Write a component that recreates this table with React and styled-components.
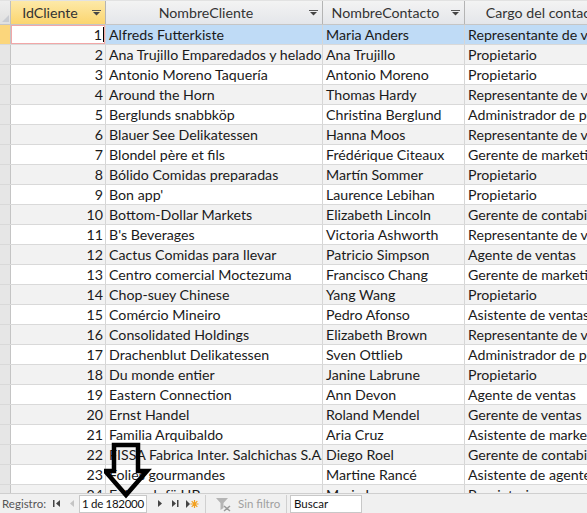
import React from 'react'
import styled, { createGlobalStyle } from 'styled-components'

const Global = createGlobalStyle`
  html, body { margin: 0; padding: 0; background: #fff; }
  body { font-family: Lato, "Open Sans", sans-serif; overflow: hidden; }
`

const COLS = '11px 95px 217px 142px 160px'

const rows = [
  ['Alfreds Futterkiste', 'Maria Anders', 'Representante de ventas'],
  ['Ana Trujillo Emparedados y helados', 'Ana Trujillo', 'Propietario'],
  ['Antonio Moreno Taquería', 'Antonio Moreno', 'Propietario'],
  ['Around the Horn', 'Thomas Hardy', 'Representante de ventas'],
  ['Berglunds snabbköp', 'Christina Berglund', 'Administrador de pedidos'],
  ['Blauer See Delikatessen', 'Hanna Moos', 'Representante de ventas'],
  ['Blondel père et fils', 'Frédérique Citeaux', 'Gerente de marketing'],
  ['Bólido Comidas preparadas', 'Martín Sommer', 'Propietario'],
  ["Bon app'", 'Laurence Lebihan', 'Propietario'],
  ['Bottom-Dollar Markets', 'Elizabeth Lincoln', 'Gerente de contabilidad'],
  ["B's Beverages", 'Victoria Ashworth', 'Representante de ventas'],
  ['Cactus Comidas para llevar', 'Patricio Simpson', 'Agente de ventas'],
  ['Centro comercial Moctezuma', 'Francisco Chang', 'Gerente de marketing'],
  ['Chop-suey Chinese', 'Yang Wang', 'Propietario'],
  ['Comércio Mineiro', 'Pedro Afonso', 'Asistente de ventas'],
  ['Consolidated Holdings', 'Elizabeth Brown', 'Representante de ventas'],
  ['Drachenblut Delikatessen', 'Sven Ottlieb', 'Administrador de pedidos'],
  ['Du monde entier', 'Janine Labrune', 'Propietario'],
  ['Eastern Connection', 'Ann Devon', 'Agente de ventas'],
  ['Ernst Handel', 'Roland Mendel', 'Gerente de ventas'],
  ['Familia Arquibaldo', 'Aria Cruz', 'Asistente de marketing'],
  ['FISSA Fabrica Inter. Salchichas S.A.', 'Diego Roel', 'Gerente de contabilidad'],
  ['Folies gourmandes', 'Martine Rancé', 'Asistente de agente de ventas'],
  ['Folk och fä HB', 'Maria Larsson', 'Propietario'],
]

const Sheet = styled.div`
  position: relative;
  width: 587px;
  height: 513px;
  display: flex;
  flex-direction: column;
  overflow: hidden;
  font-size: 14.2px;
  color: #1a1a1a;
`

const HeadRow = styled.div`
  display: grid;
  grid-template-columns: ${COLS};
  height: 25px;
  flex: none;
  border-top: 1px solid #e2e2e2;
  border-bottom: 1px solid #c5c5c5;
  box-sizing: border-box;
`

const HeadCell = styled.div`
  display: flex;
  align-items: center;
  justify-content: center;
  position: relative;
  padding-right: ${p => (p.$filter ? '16px' : '0')};
  border-right: 1px solid #b4b4b4;
  color: #333;
  white-space: nowrap;
  overflow: hidden;
  background: ${p => (p.$active
    ? 'linear-gradient(#fde9a8, #fbd56f)'
    : 'linear-gradient(#f3f3f3, #e4e6ea)')};
`

const Corner = styled(HeadCell)`
  background: linear-gradient(#eeeeee, #e0e0e0);
  border-right: 1px solid #c0c0c0;
`

const Filter = styled.svg`
  position: absolute;
  right: 4px;
  top: 9px;
`

const Body = styled.div`
  flex: 1;
  overflow: hidden;
`

const Row = styled.div`
  display: grid;
  grid-template-columns: ${COLS};
  height: 20px;
  box-sizing: border-box;
  border-bottom: 1px solid #d9d9d9;
  background: ${p => (p.$alt ? '#f2f2f2' : '#fff')};
`

const Selector = styled.div`
  background: ${p => (p.$on ? '#fbd67c' : '#e6e6e6')};
  border-right: 1px solid #c4c4c4;
`

const Cell = styled.div`
  display: flex;
  align-items: center;
  justify-content: ${p => (p.$num ? 'flex-end' : 'flex-start')};
  padding: 0 ${p => (p.$num ? '2px' : '0')} 0 ${p => (p.$num ? '0' : '3px')};
  border-right: 1px solid #d6d6d6;
  white-space: nowrap;
  overflow: hidden;
  background: ${p => (p.$sel ? '#bfdbf6' : 'transparent')};
`

const EditCell = styled(Cell)`
  background: #fff;
  box-shadow: inset 0 0 0 1px #f2a7a7;
  padding-right: 1px;
`

const Caret = styled.span`
  display: inline-block;
  width: 1px;
  height: 15px;
  background: #000;
  margin-left: 1px;
`

const Status = styled.div`
  flex: none;
  height: 20px;
  display: flex;
  align-items: center;
  background: #f0f0f0;
  border-top: 1px solid #cfcfcf;
  font-size: 11.5px;
  color: #555;
  box-sizing: border-box;
  white-space: nowrap;
`

const Label = styled.span`
  width: 48px;
  padding-left: 2px;
  box-sizing: border-box;
`

const NavBtn = styled.span`
  width: ${p => p.$w || 15}px;
  display: flex;
  justify-content: center;
  align-items: center;
`

const Counter = styled.div`
  width: 68px;
  height: 18px;
  background: #fff;
  border: 1px solid #c8c8c8;
  box-sizing: border-box;
  display: flex;
  align-items: center;
  padding-left: 2px;
  letter-spacing: -0.3px;
  color: #111;
  margin: 0 6px 0 0;
  overflow: hidden;
`

const Sep = styled.div`
  width: 1px;
  height: 18px;
  background: #d0d0d0;
`

const FilterBtn = styled.div`
  display: flex;
  align-items: center;
  gap: 4px;
  width: 80px;
  padding-left: 8px;
  box-sizing: border-box;
  color: #a0a0a0;
`

const Search = styled.div`
  width: 72px;
  height: 18px;
  background: #fff;
  border: 1px solid #c8c8c8;
  box-sizing: border-box;
  display: flex;
  align-items: center;
  padding-left: 3px;
  color: #111;
  margin-left: 3px;
`

const Pointer = styled.svg`
  position: absolute;
  left: 104px;
  top: 441px;
  pointer-events: none;
`

const FilterArrow = () => (
  <Filter width="9" height="6" viewBox="0 0 9 6">
    <rect x="0" y="0" width="9" height="1" fill="#555" />
    <path d="M1 2h7l-3.5 3.5z" fill="#444" />
  </Filter>
)

const Tri = ({ dir = 'r', color = '#444', bar }) => (
  <svg width="9" height="9" viewBox="0 0 9 9">
    {dir === 'r'
      ? <path d={bar ? 'M1 1v7l4-3.5z' : 'M2 1v7l4-3.5z'} fill={color} />
      : <path d={bar ? 'M8 1v7l-4-3.5z' : 'M7 1v7l-4-3.5z'} fill={color} />}
    {bar && <rect x={dir === 'r' ? 6 : 1} y="1" width="1.5" height="7" fill={color} />}
  </svg>
)

const NewRec = () => (
  <svg width="14" height="10" viewBox="0 0 14 10">
    <path d="M1 1v8l4-4z" fill="#444" />
    <path d="M9.5 1v8M5.5 5h8M6.7 2.2l5.6 5.6M6.7 7.8l5.6-5.6" stroke="#f2a01e" strokeWidth="1.2" />
  </svg>
)

const Funnel = () => (
  <svg width="20" height="16" viewBox="0 0 20 16">
    <path d="M2 2h12l-4.5 5v5l-3 2v-7z" fill="#b5b5b5" />
    <path d="M10 10l6 5M16 10l-6 5" stroke="#9a9a9a" strokeWidth="1.5" />
  </svg>
)

export default function App() {
  return (
    <Sheet>
      <Global />
      <HeadRow>
        <Corner>
          <svg width="11" height="24" viewBox="0 0 11 24" style={{ position: 'absolute', left: 0, top: 0 }}>
            <path d="M9 14v7H2z" fill="#c9ccd2" />
          </svg>
        </Corner>
        <HeadCell $active $filter>IdCliente<FilterArrow /></HeadCell>
        <HeadCell $filter>NombreCliente<FilterArrow /></HeadCell>
        <HeadCell $filter>NombreContacto<FilterArrow /></HeadCell>
        <HeadCell>Cargo del contacto</HeadCell>
      </HeadRow>
      <Body>
        {rows.map((r, i) => {
          const first = i === 0
          return (
            <Row key={i} $alt={i % 2 === 1}>
              <Selector $on={first} />
              {first
                ? <EditCell $num>1<Caret /></EditCell>
                : <Cell $num>{i + 1}</Cell>}
              <Cell $sel={first}>{r[0]}</Cell>
              <Cell $sel={first}>{r[1]}</Cell>
              <Cell $sel={first}>{r[2]}</Cell>
            </Row>
          )
        })}
      </Body>
      <Status>
        <Label>Registro:</Label>
        <NavBtn $w={16}><Tri dir="l" bar /></NavBtn>
        <NavBtn $w={15}><Tri dir="l" color="#c4c4c4" /></NavBtn>
        <Counter>1 de 182000</Counter>
        <NavBtn $w={15}><Tri dir="r" /></NavBtn>
        <NavBtn $w={15}><Tri dir="r" bar /></NavBtn>
        <NavBtn $w={18}><NewRec /></NavBtn>
        <Sep style={{ marginLeft: 4 }} />
        <FilterBtn><Funnel />Sin filtro</FilterBtn>
        <Sep />
        <Search>Buscar</Search>
      </Status>
      <Pointer width="48" height="60" viewBox="0 0 48 60">
        <path d="M10 4h24v26h9L22 54 1 30h9z" fill="none" stroke="#000" strokeWidth="4.5" strokeLinejoin="miter" />
      </Pointer>
    </Sheet>
  )
}
